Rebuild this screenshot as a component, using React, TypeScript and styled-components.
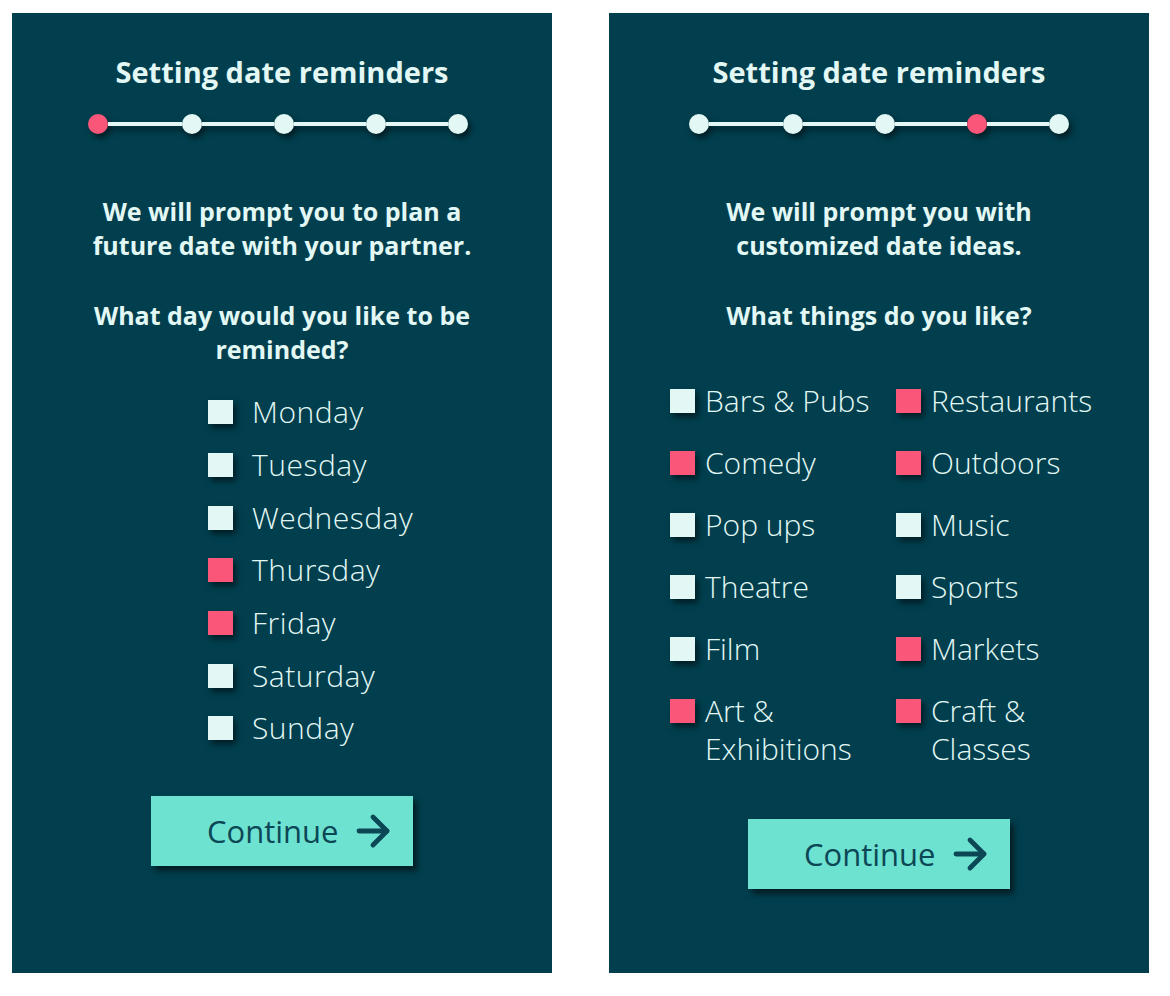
import { createGlobalStyle } from "styled-components";
import styled from "styled-components";
import { ArrowRight } from "lucide-react";

const colors = {
  panel: "#013f4e",
  light: "#e3f8f4",
  pink: "#f95679",
  button: "#6ee2d0",
  buttonText: "#0c4756",
};

const GlobalStyle = createGlobalStyle`
  body {
    margin: 0;
    background: #ffffff;
    font-family: "Open Sans", "Noto Sans", sans-serif;
  }
`;

const days = [
  { label: "Monday", checked: false },
  { label: "Tuesday", checked: false },
  { label: "Wednesday", checked: false },
  { label: "Thursday", checked: true },
  { label: "Friday", checked: true },
  { label: "Saturday", checked: false },
  { label: "Sunday", checked: false },
];

const interests = [
  { label: "Bars & Pubs", checked: false },
  { label: "Restaurants", checked: true },
  { label: "Comedy", checked: true },
  { label: "Outdoors", checked: true },
  { label: "Pop ups", checked: false },
  { label: "Music", checked: false },
  { label: "Theatre", checked: false },
  { label: "Sports", checked: false },
  { label: "Film", checked: false },
  { label: "Markets", checked: true },
  { label: "Art & Exhibitions", checked: true },
  { label: "Craft & Classes", checked: true },
];

const connectorWidths = [74, 72, 72, 62];

function Stepper({ active, shift }: { active: number; shift: number }) {
  return (
    <StepRow $shift={shift}>
      {connectorWidths.map((w, i) => (
        <StepGroup key={i}>
          <Dot $active={i === active} />
          <Connector style={{ width: w }} />
        </StepGroup>
      ))}
      <Dot $active={active === 4} />
    </StepRow>
  );
}

function ContinueButton({ top }: { top: number }) {
  return (
    <Button $top={top}>
      Continue
      <ArrowRight size={48} strokeWidth={2.4} />
    </Button>
  );
}

export default function App() {
  return (
    <>
      <GlobalStyle />
      <Page>
        <Panel>
          <Title>Setting date reminders</Title>
          <Stepper active={0} shift={8} />
          <Lead>
            We will prompt you to plan a<br />
            future date with your partner.
          </Lead>
          <Question>
            What day would you like to be
            <br />
            reminded?
          </Question>
          <DayList>
            {days.map((d) => (
              <DayRow key={d.label}>
                <Box $checked={d.checked} />
                <DayLabel>{d.label}</DayLabel>
              </DayRow>
            ))}
          </DayList>
          <ContinueButton top={41} />
        </Panel>

        <Panel>
          <Title>Setting date reminders</Title>
          <Stepper active={3} shift={0} />
          <Lead>
            We will prompt you with
            <br />
            customized date ideas.
          </Lead>
          <Question>What things do you like?</Question>
          <InterestGrid>
            {interests.map((it) => (
              <InterestItem key={it.label}>
                <Box $checked={it.checked} />
                <InterestLabel>{it.label}</InterestLabel>
              </InterestItem>
            ))}
          </InterestGrid>
          <ContinueButton top={51} />
        </Panel>
      </Page>
    </>
  );
}

const Page = styled.div`
  display: flex;
  gap: 57px;
  padding: 13px 0 0 12px;
`;

const Panel = styled.section`
  width: 540px;
  height: 960px;
  box-sizing: border-box;
  padding-top: 42px;
  background: ${colors.panel};
  color: ${colors.light};
  display: flex;
  flex-direction: column;
  align-items: center;
`;

const Title = styled.h1`
  margin: 0;
  font-size: 29px;
  line-height: 34px;
  font-weight: 700;
  text-align: center;
`;

const StepRow = styled.div<{ $shift: number }>`
  display: flex;
  align-items: center;
  margin: 25px ${(p) => p.$shift}px 0 0;
  filter: drop-shadow(3px 4px 3px rgba(0, 0, 0, 0.55));
`;

const StepGroup = styled.div`
  display: flex;
  align-items: center;
`;

const Dot = styled.span<{ $active: boolean }>`
  width: 20px;
  height: 20px;
  border-radius: 50%;
  flex-shrink: 0;
  background: ${(p) => (p.$active ? colors.pink : colors.light)};
`;

const Connector = styled.span`
  height: 4px;
  background: ${colors.light};
`;

const Lead = styled.p`
  margin: 60px 0 0;
  font-size: 25px;
  line-height: 34px;
  font-weight: 700;
  text-align: center;
`;

const Question = styled(Lead)`
  margin-top: 36px;
`;

const DayList = styled.div`
  align-self: flex-start;
  margin: 20px 0 0 196px;
  display: flex;
  flex-direction: column;
`;

const DayRow = styled.div`
  height: 52.67px;
  display: flex;
  align-items: center;
  gap: 19px;
`;

const Box = styled.span<{ $checked: boolean }>`
  width: 25px;
  height: 24px;
  flex-shrink: 0;
  background: ${(p) => (p.$checked ? colors.pink : colors.light)};
  box-shadow: 3px 4px 6px rgba(0, 0, 0, 0.55);
`;

const DayLabel = styled.span`
  font-size: 30px;
  font-weight: 300;
  line-height: 40px;
  letter-spacing: 0.5px;
`;

const InterestGrid = styled.div`
  align-self: flex-start;
  margin: 50px 0 0 61px;
  display: grid;
  grid-template-columns: 226px 200px;
  row-gap: 24px;
`;

const InterestItem = styled.div`
  display: flex;
  align-items: flex-start;
  gap: 10px;

  ${Box} {
    margin-top: 7px;
  }
`;

const InterestLabel = styled.span`
  max-width: 180px;
  font-size: 30px;
  font-weight: 300;
  line-height: 38px;
`;

const Button = styled.button<{ $top: number }>`
  margin-top: ${(p) => p.$top}px;
  width: 262px;
  height: 70px;
  box-sizing: border-box;
  padding: 0 0 0 56px;
  border: none;
  background: ${colors.button};
  color: ${colors.buttonText};
  font-family: "Open Sans", "Noto Sans", sans-serif;
  font-size: 31px;
  font-weight: 400;
  display: flex;
  align-items: center;
  gap: 10px;
  box-shadow: 4px 5px 6px rgba(0, 0, 0, 0.55);
  cursor: pointer;
`;
